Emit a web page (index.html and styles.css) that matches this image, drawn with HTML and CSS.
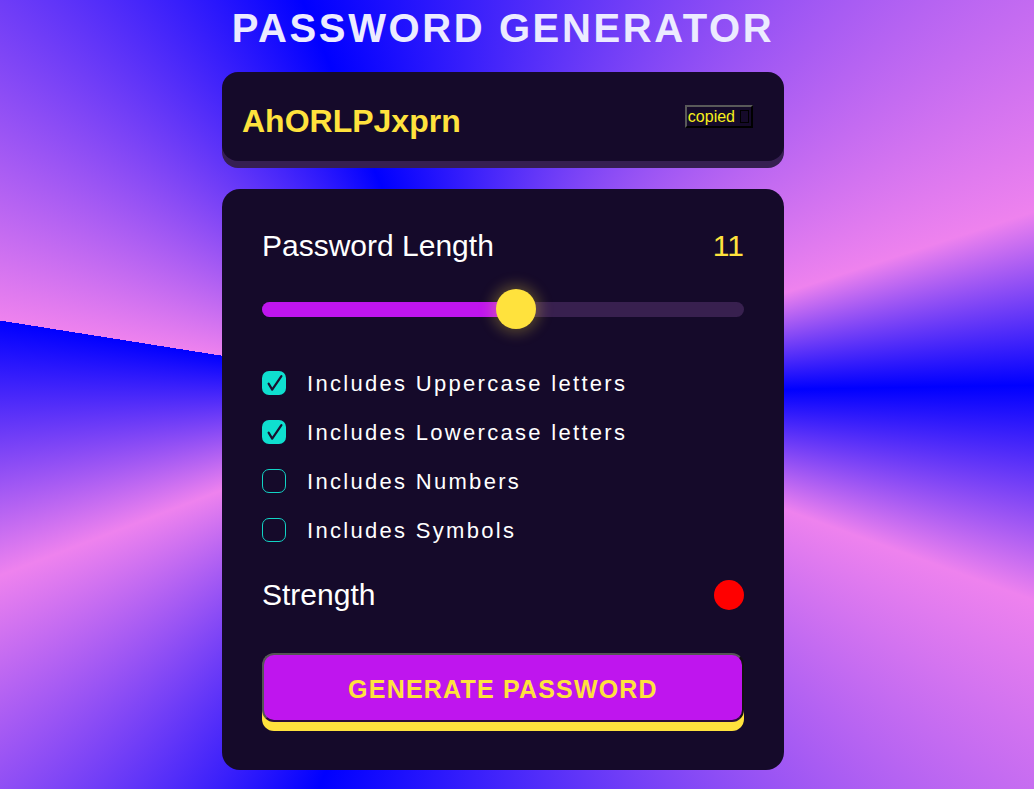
FILE: index.html
```html
<!DOCTYPE html>
<html lang="en">
<head>
<meta charset="utf-8">
<title>Password Generator</title>
<link rel="stylesheet" href="styles.css">
</head>
<body>
<main class="app">
  <h1 class="title">PASSWORD GENERATOR</h1>

  <section class="display">
    <span class="password">AhORLPJxprn</span>
    <button class="copy-btn" type="button">copied<span class="tofu"></span></button>
  </section>

  <section class="panel">
    <div class="row length-row">
      <span class="label">Password Length</span>
      <span class="value">11</span>
    </div>

    <div class="slider">
      <div class="track"><div class="fill" style="width:52.6%"></div></div>
      <div class="thumb" style="left:52.6%"></div>
    </div>

    <ul class="options">
      <li class="option">
        <span class="box checked"><svg viewBox="0 0 24 24" width="24" height="24"><path d="M6.6 12.6 L10.2 18.6 L19.4 5.2" /></svg></span>
        <span class="option-text">Includes Uppercase letters</span>
      </li>
      <li class="option">
        <span class="box checked"><svg viewBox="0 0 24 24" width="24" height="24"><path d="M6.6 12.6 L10.2 18.6 L19.4 5.2" /></svg></span>
        <span class="option-text">Includes Lowercase letters</span>
      </li>
      <li class="option">
        <span class="box"></span>
        <span class="option-text">Includes Numbers</span>
      </li>
      <li class="option">
        <span class="box"></span>
        <span class="option-text">Includes Symbols</span>
      </li>
    </ul>

    <div class="row strength-row">
      <span class="label">Strength</span>
      <span class="dot"></span>
    </div>

    <button class="generate" type="button">GENERATE PASSWORD</button>
  </section>
</main>
</body>
</html>
```

FILE: styles.css
```css
html {
  min-height: 100%;
  background: conic-gradient(from 279deg at 470px 395px,
    #ee82ee 0deg,
    #0000ff 58deg,
    #ee82ee 153deg,
    #0000ff 170deg,
    #ee82ee 191deg,
    #0000ff 282deg,
    #ee82ee 330deg,
    #0000ff 360deg);
}

body {
  margin: 0;
  padding-right: 28px;
  display: flex;
  justify-content: center;
  font-family: "Liberation Sans", Arial, sans-serif;
}

.app {
  width: 562px;
}

.title {
  margin: 5px 0 21px;
  font-size: 40px;
  line-height: 46px;
  font-weight: bold;
  letter-spacing: 2.6px;
  text-align: center;
  color: #ecebff;
}

.display {
  box-sizing: border-box;
  height: 89px;
  background: #150a2a;
  border-radius: 16px;
  box-shadow: 0 7px 0 #361f52;
  display: flex;
  align-items: center;
  justify-content: space-between;
  padding: 0 31px 0 20px;
}

.password {
  margin-top: 8px;
  font-size: 32px;
  line-height: 32px;
  font-weight: bold;
  color: #ffe23d;
}

.copy-btn {
  box-sizing: border-box;
  height: 23px;
  display: inline-flex;
  align-items: center;
  padding: 0 2px 0 1px;
  background: transparent;
  border: 2px solid;
  border-color: #595959 #000 #000 #595959;
  font-family: "Liberation Sans", Arial, sans-serif;
  font-size: 16px;
  line-height: 19px;
  color: #f8f01a;
}

.tofu {
  box-sizing: border-box;
  width: 9px;
  height: 13px;
  margin-left: 5px;
  border: 1px solid #000;
}

.panel {
  margin-top: 28px;
  background: #150a2a;
  border-radius: 18px;
  padding: 40px 40px 48px;
}

.row {
  display: flex;
  align-items: center;
  justify-content: space-between;
  font-size: 30px;
  line-height: 34px;
  color: #ffffff;
}

.value {
  color: #ffe23d;
}

.slider {
  position: relative;
  height: 40px;
  margin-top: 26px;
  display: flex;
  align-items: center;
}

.track {
  width: 100%;
  height: 15px;
  border-radius: 8px;
  background: #38204f;
  overflow: hidden;
}

.fill {
  height: 100%;
  background: #bf15ee;
}

.thumb {
  position: absolute;
  top: 0;
  width: 40px;
  height: 40px;
  margin-left: -20px;
  border-radius: 50%;
  background: #ffe23d;
  box-shadow: 0 0 14px 4px rgba(255, 226, 61, 0.28);
}

.options {
  list-style: none;
  margin: 42px 0 0;
  padding: 0;
  display: flex;
  flex-direction: column;
  gap: 25px;
}

.option {
  height: 24px;
  display: flex;
  align-items: center;
  gap: 21px;
  font-size: 22px;
  line-height: 25px;
  letter-spacing: 2.3px;
  color: #ffffff;
}

.box {
  box-sizing: border-box;
  flex: none;
  width: 24px;
  height: 24px;
  border-radius: 7px;
  border: 1px solid #12d3c4;
}

.box.checked {
  border: none;
  background: #0fdfcf;
}

.box svg {
  display: block;
}

.box path {
  fill: none;
  stroke: #1a0f2e;
  stroke-width: 2.2;
  stroke-linecap: round;
  stroke-linejoin: round;
}

.strength-row {
  margin-top: 36px;
}

.dot {
  width: 30px;
  height: 30px;
  border-radius: 50%;
  background: #ff0000;
}

.generate {
  box-sizing: border-box;
  display: block;
  width: 100%;
  height: 69px;
  margin-top: 41px;
  padding: 4px 0 0;
  border: 2px solid;
  border-color: #555555 #111111 #2a0d3a #555555;
  border-radius: 12px;
  background: #bf15ee;
  box-shadow: 0 9px 0 #ffe23d;
  font-family: "Liberation Sans", Arial, sans-serif;
  font-size: 25px;
  font-weight: bold;
  letter-spacing: 1.2px;
  color: #ffe23d;
}
```
